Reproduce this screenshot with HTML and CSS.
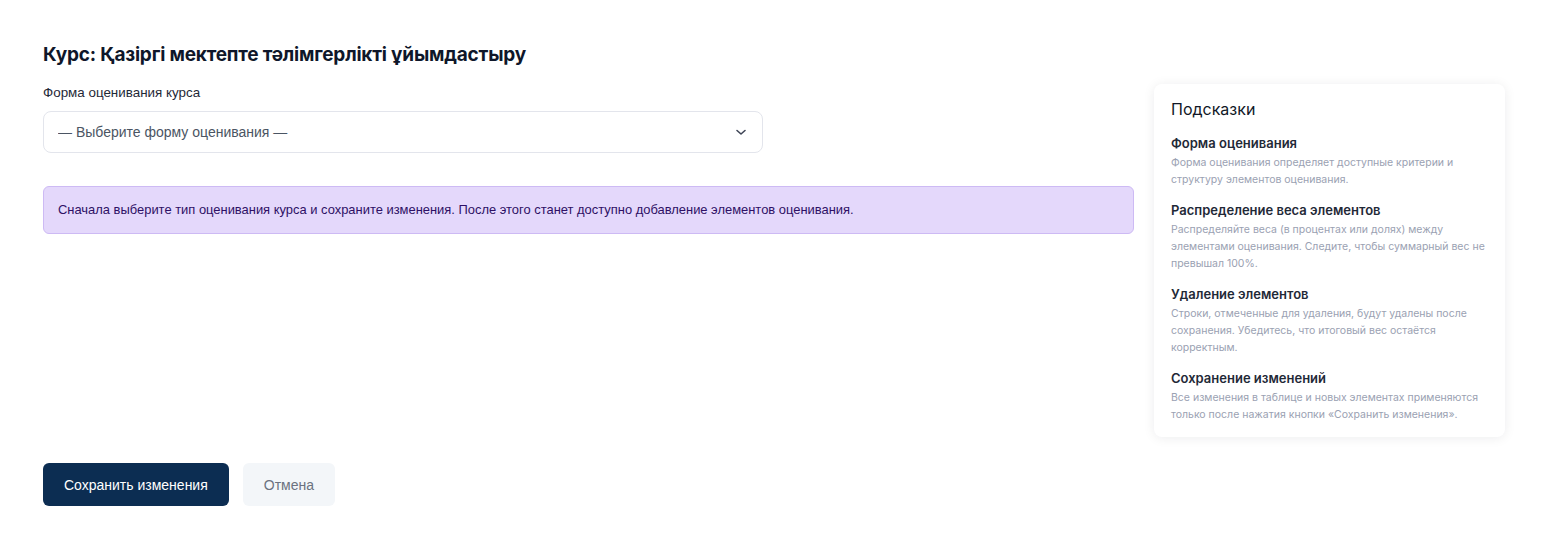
FILE: index.html
```html
<!DOCTYPE html>
<html lang="ru">
<head>
    <meta charset="UTF-8">
    <meta name="viewport" content="width=device-width, initial-scale=1.0">
    <title>Курс: форма оценивания</title>
    <link rel="stylesheet" href="styles.css">
</head>
<body>
    <div class="page">
        <h1 class="course-title">Курс: Қазіргі мектепте тәлімгерлікті ұйымдастыру</h1>

        <div class="layout">
            <div class="main">
                <label class="field-label" for="grading">Форма оценивания курса</label>
                <div class="select-wrap">
                    <select id="grading" class="select">
                        <option>— Выберите форму оценивания —</option>
                    </select>
                    <svg class="select-arrow" width="14" height="14" viewBox="0 0 14 14" fill="none">
                        <path d="M3 5.5l4 3.5 4-3.5" stroke="#3f4556" stroke-width="1.6" stroke-linecap="round" stroke-linejoin="round"/>
                    </svg>
                </div>

                <div class="notice">
                    Сначала выберите тип оценивания курса и сохраните изменения. После этого станет доступно добавление элементов оценивания.
                </div>
            </div>

            <aside class="hints">
                <h2 class="hints-title">Подсказки</h2>
                <div class="hint">
                    <h3>Форма оценивания</h3>
                    <p>Форма оценивания определяет доступные критерии и структуру элементов оценивания.</p>
                </div>
                <div class="hint">
                    <h3>Распределение веса элементов</h3>
                    <p>Распределяйте веса (в процентах или долях) между элементами оценивания. Следите, чтобы суммарный вес не превышал 100%.</p>
                </div>
                <div class="hint">
                    <h3>Удаление элементов</h3>
                    <p>Строки, отмеченные для удаления, будут удалены после сохранения. Убедитесь, что итоговый вес остаётся корректным.</p>
                </div>
                <div class="hint">
                    <h3>Сохранение изменений</h3>
                    <p>Все изменения в таблице и новых элементах применяются только после нажатия кнопки «Сохранить изменения».</p>
                </div>
            </aside>
        </div>

        <div class="actions">
            <button class="btn btn-primary" type="button">Сохранить изменения</button>
            <button class="btn btn-light" type="button">Отмена</button>
        </div>
    </div>
</body>
</html>
```

FILE: styles.css
```css
body {
    margin: 0;
    background: #ffffff;
    font-family: "Liberation Sans", Arial, sans-serif;
    color: #111827;
}
.page {
    padding: 42px 48px 40px 43px;
}
.course-title {
    font-family: Inter, "Noto Sans", sans-serif;
    font-size: 19px;
    font-weight: 700;
    letter-spacing: -0.2px;
    color: #0f172a;
    margin: 0 0 16px;
    line-height: 26px;
}
.layout {
    display: grid;
    grid-template-columns: 1fr 351px;
    gap: 20px;
    align-items: start;
}
.field-label {
    display: block;
    font-size: 13.4px;
    color: #1f2937;
    margin: 1px 0 10px;
    line-height: 16px;
}
.select-wrap {
    position: relative;
    width: 720px;
}
.select {
    appearance: none;
    width: 100%;
    height: 42px;
    padding: 0 40px 0 14px;
    border: 1px solid #e3e5ec;
    border-radius: 8px;
    background: #fff;
    font-family: "Liberation Sans", Arial, sans-serif;
    font-size: 14px;
    color: #4b5563;
}
.select-arrow {
    position: absolute;
    right: 15px;
    top: 14px;
    pointer-events: none;
}
.notice {
    margin-top: 33px;
    background: #e4d8fb;
    border: 1px solid #cdbaf4;
    border-radius: 6px;
    padding: 15px 14px;
    font-size: 12.93px;
    line-height: 16px;
    color: #2e1065;
}
.hints {
    background: #fff;
    border-radius: 8px;
    box-shadow: 0 1px 12px rgba(15, 23, 42, 0.08);
    padding: 15px 17px 14px;
    font-family: Inter, "Noto Sans", sans-serif;
}
.hints-title {
    font-size: 16px;
    font-weight: 400;
    color: #111827;
    margin: 0 0 15px;
    line-height: 20px;
}
.hint {
    margin-bottom: 13px;
}
.hint:last-child {
    margin-bottom: 0;
}
.hint h3 {
    font-size: 13px;
    font-weight: 600;
    color: #1f2937;
    margin: 0 0 2px;
    line-height: 18px;
}
.hint p {
    font-size: 10.5px;
    line-height: 17px;
    color: #9aa1b2;
    margin: 0;
}
.actions {
    display: flex;
    gap: 14px;
    margin-top: 26px;
}
.btn {
    height: 43px;
    border: none;
    border-radius: 6px;
    font-family: "Liberation Sans", Arial, sans-serif;
    font-size: 14px;
    padding: 0 21px;
    cursor: pointer;
}
.btn-primary {
    background: #0c2d52;
    color: #fff;
}
.btn-light {
    background: #f3f6f9;
    color: #6b7280;
}
```
